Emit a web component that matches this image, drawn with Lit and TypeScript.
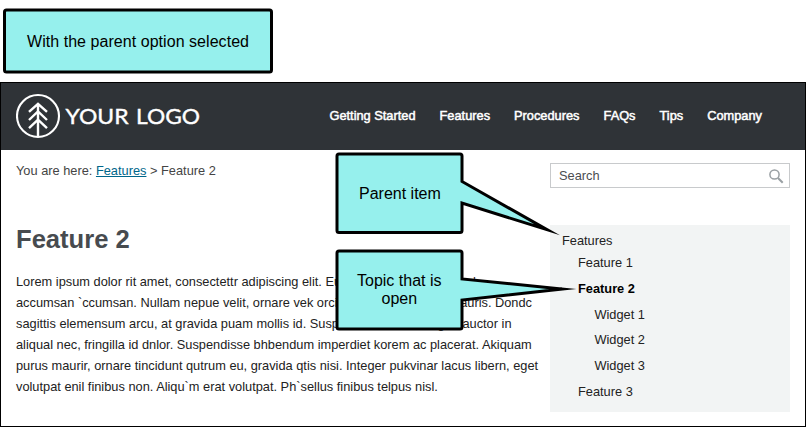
import { LitElement, html, css } from "lit";
import { customElement } from "lit/decorators.js";

@customElement("app-root")
class AppRoot extends LitElement {
  static styles = css`
    :host { display: block; position: relative; width: 806px; height: 427px; box-sizing: border-box; background: #fff; overflow: hidden; font: 12.8px/21px "Liberation Sans", Arial, sans-serif; color: #222; padding-top: 82px; }
    .frame { box-sizing: border-box; height: 345px; border: 1px solid #000; }
    header { height: 67px; background: #2f3337; display: flex; align-items: center; justify-content: space-between; padding: 0 43px 0 15px; box-sizing: border-box; }
    .logo { display: block; margin-bottom: 1px; }
    nav { display: flex; gap: 24px; color: #fff; margin-bottom: 2px; -webkit-text-stroke: 0.5px #fff; }
    .page { display: grid; grid-template-columns: 534px 240px; padding: 0 15px; }
    .crumb { margin-top: 10px; color: #444; }
    .crumb a { color: #00668a; text-decoration: underline; }
    h1 { margin: 43px 0 0; font-size: 25.6px; line-height: 30px; color: #474b4f; }
    .body { margin-top: 17px; }
    .line { white-space: nowrap; display: flex; justify-content: space-between; }
    .w1 { width: 460px; }
    .w2 { width: 516px; }
    .w3 { width: 495.5px; }
    .search { margin-top: 13px; box-sizing: border-box; height: 25px; border: 1px solid #c8cacc; display: flex; align-items: center; justify-content: space-between; padding: 0 5px 0 8px; color: #4a4d50; }
    .tree { margin-top: 37px; box-sizing: border-box; height: 187px; background: #f2f4f4; padding: 5px 12px; }
    .item { height: 25.7px; }
    .item.root { height: 22.3px; }
    .l1 { padding-left: 16px; }
    .l2 { padding-left: 32.4px; }
    .on { font-weight: bold; color: #000; }
    .over { position: absolute; left: 0; top: 0; }
    text { font-family: "Liberation Sans", Arial, sans-serif; font-size: 16px; fill: #000; }
    .brand { font-family: Lato, sans-serif; font-size: 22px; fill: #fff; stroke: #fff; stroke-width: 0.4px; }
  `;
  nav = ["Getting Started", "Features", "Procedures", "FAQs", "Tips", "Company"];
  lines = [
    ["Lorem ipsum dolor rit amet, consectettr adipiscing elit. Eu", "w1", "sed"],
    ["accumsan `ccumsan. Nullam nepue velit, ornare vek orci", "w2", "mauris. Dondc"],
    ["sagittis elemensum arcu, at gravida puam mollis id. Susp", "w3", "congue auctor in"],
    ["aliqual nec, fringilla id dnlor. Suspendisse bhbendum imperdiet korem ac placerat. Akiquam"],
    ["purus maurir, ornare tincidunt qutrum eu, gravida qtis nisi. Integer pukvinar lacus libern, eget"],
    ["volutpat enil finibus non. Aliqu`m erat volutpat. Ph`sellus finibus telpus nisl."],
  ];
  tree = [["Features", "root"], ["Feature 1", "l1"], ["Feature 2", "l1 on"], ["Widget 1", "l2"], ["Widget 2", "l2"], ["Widget 3", "l2"], ["Feature 3", "l1"]];
  render() {
    return html`
      <div class="frame">
        <header>
          <svg class="logo" width="190" height="46" viewBox="0 0 190 46">
            <g fill="none" stroke="#fff" stroke-width="2.1">
              <circle cx="22" cy="23" r="21" />
              <path stroke-width="2.400" d="M22 11V44M13 18.800L22 10.800L31 18.800M13 27L22 18.500L31 27M13 35.200L22 26.700L31 35.200" />
            </g>
            <text class="brand" x="49.500" y="30.500" textLength="63" lengthAdjust="spacingAndGlyphs">YOUR</text>
            <text class="brand" x="120" y="30.500" textLength="64" lengthAdjust="spacingAndGlyphs">LOGO</text>
          </svg>
          <nav>${this.nav.map((n) => html`<span>${n}</span>`)}</nav>
        </header>
        <div class="page">
          <main>
            <div class="crumb">You are here: <a>Features</a> &gt; Feature 2</div>
            <h1>Feature 2</h1>
            <div class="body">${this.lines.map(([a, w = "", b = ""]) => html`<div class="line ${w}"><span>${a}</span><span>${b}</span></div>`)}</div>
          </main>
          <aside>
            <div class="search"><span>Search</span>
              <svg width="16" height="16" viewBox="0 0 16 16" fill="none" stroke="#999fa3"><circle cx="6.500" cy="6.500" r="4.600" stroke-width="1.500" /><path d="M10 10L14.700 14.700" stroke-width="2" /></svg>
            </div>
            <div class="tree">${this.tree.map(([t, c]) => html`<div class="item ${c}">${t}</div>`)}</div>
          </aside>
        </div>
      </div>
      <svg class="over" width="806" height="427" viewBox="0 0 806 427">
        <g fill="#96f0ed" stroke="#000" stroke-width="3" stroke-miterlimit="20">
          <rect x="4.500" y="10" width="267" height="62" rx="2" />
          <path d="M339 154H460Q462 154 462 156V181.500L547 229.700L462 203V230.500Q462 232.500 460 232.500H339Q337 232.500 337 230.500V156Q337 154 339 154Z" />
          <path d="M339 251H460Q462 251 462 253V279L562 289L462 300V327Q462 329 460 329H339Q337 329 337 327V253Q337 251 339 251Z" />
        </g>
        <text x="27" y="47" textLength="222">With the parent option selected</text>
        <text x="359" y="199">Parent item</text>
        <text x="357" y="286">Topic that is</text>
        <text x="381.500" y="304">open</text>
      </svg>`;
  }
}
